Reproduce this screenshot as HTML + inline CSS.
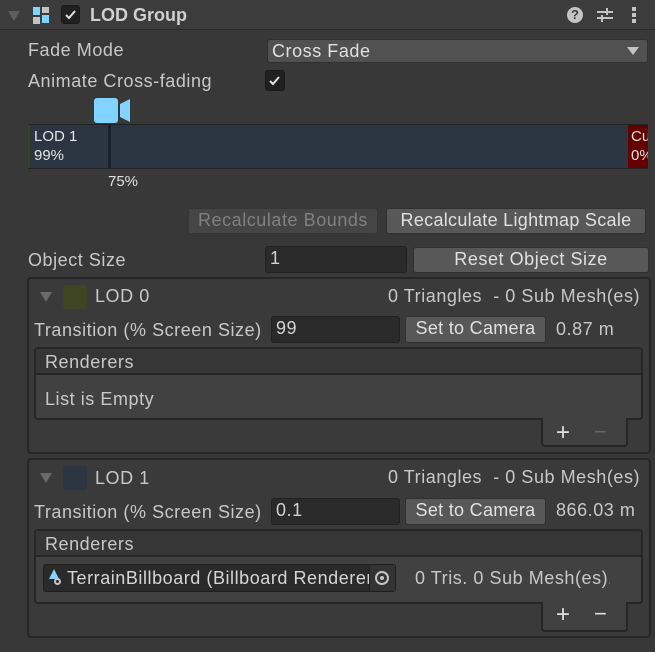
<!DOCTYPE html>
<html><head><style>
*{margin:0;padding:0;box-sizing:border-box}
body{width:655px;height:652px;background:#383838;font-family:"Liberation Sans",sans-serif;color:#c8c8c8;font-size:18px;letter-spacing:0.55px;position:relative;overflow:hidden}
.a{position:absolute;white-space:nowrap}
.t{line-height:20px}
.btn{position:absolute;background:#585858;border:1px solid #303030;border-radius:3px;color:#e0e0e0;text-align:center;line-height:23px}
.inp{position:absolute;background:#2a2a2a;border:1px solid #212121;border-radius:3px;color:#d2d2d2;padding-left:4px;line-height:23px}
.box{position:absolute;border:2px solid #262626;border-radius:4px;background:#3a3a3a}
.tri{position:absolute;width:0;height:0;border-left:6px solid transparent;border-right:6px solid transparent;border-top:10px solid #6a6a6a}
.cb{position:absolute;background:#202020;border:1px solid #1a1a1a;border-radius:3px}
</style></head><body>
<div class="a" style="left:0;top:0;width:655px;height:30px;background:#3c3c3c;border-bottom:1px solid #2a2a2a"></div>
<div class="tri" style="left:8px;top:11px;border-top-color:#5e5e5e"></div>
<div class="a" style="left:33px;top:7px;width:7px;height:8px;background:#80d4ff"></div>
<div class="a" style="left:42px;top:7px;width:7px;height:6px;background:#c4c4c4"></div>
<div class="a" style="left:33px;top:17px;width:7px;height:7px;background:#c4c4c4"></div>
<div class="a" style="left:42px;top:15px;width:7px;height:8px;background:#80d4ff"></div>
<div class="cb" style="left:61px;top:5px;width:19px;height:19px"></div>
<svg class="a" style="left:61px;top:5px" width="19" height="19"><path d="M5 10l3 3l6-7" stroke="#e0e0e0" stroke-width="2" fill="none"/></svg>
<div class="a t" style="left:90px;top:5px;font-weight:bold;font-size:18px;letter-spacing:0;color:#d0d0d0">LOD Group</div>
<div class="a" style="left:567px;top:7px;width:16px;height:16px;border-radius:50%;background:#c4c4c4;color:#3c3c3c;font-weight:bold;font-size:13px;letter-spacing:0;text-align:center;line-height:16px">?</div>
<svg class="a" style="left:596px;top:6px" width="18" height="18"><path d="M1 6h16M1 12h16M11 2v7M6 9v7" stroke="#c4c4c4" stroke-width="2"/></svg>
<div class="a" style="left:632px;top:7px;width:4px;height:4px;background:#c4c4c4;box-shadow:0 6px #c4c4c4,0 12px #c4c4c4"></div>

<div class="a t" style="left:28px;top:40px">Fade Mode</div>
<div class="a" style="left:267px;top:39px;width:381px;height:24px;background:#515151;border:1px solid #303030;border-radius:3px;color:#e0e0e0;padding-left:4px;line-height:22px">Cross Fade</div>
<div class="a" style="left:627px;top:47px;border-left:6px solid transparent;border-right:6px solid transparent;border-top:8px solid #c4c4c4"></div>
<div class="a t" style="left:28px;top:71px">Animate Cross-fading</div>
<div class="cb" style="left:265px;top:70px;width:20px;height:21px"></div>
<svg class="a" style="left:265px;top:71px" width="20" height="20"><path d="M5 10l3 3l6-7" stroke="#e0e0e0" stroke-width="2" fill="none"/></svg>

<div class="a" style="left:94px;top:98px;width:24px;height:25px;background:#80d4ff;border-radius:3px"></div>
<div class="a" style="left:120px;top:99px;width:0;height:23px;border-right:10px solid #80d4ff;border-top:5px solid transparent;border-bottom:5px solid transparent"></div>
<div class="a" style="left:28px;top:124px;width:620px;height:45px;background:#2c3542;border:1px solid #222"></div>
<div class="a" style="left:28px;top:125px;width:2px;height:43px;background:#3a4520"></div>
<div class="a" style="left:628px;top:125px;width:20px;height:43px;background:#640000;overflow:hidden;color:#e0e0e0;font-size:15px;letter-spacing:0;line-height:19px;padding:2px 0 0 3px">Cu<br>0%</div>
<div class="a" style="left:108px;top:125px;width:3px;height:43px;background:#1c2028"></div>
<div class="a" style="left:34px;top:127px;color:#e6e6e6;font-size:15px;letter-spacing:0;line-height:19px">LOD 1<br>99%</div>
<div class="a" style="left:108px;top:173px;color:#e0e0e0;font-size:15px;letter-spacing:0">75%</div>

<div class="btn" style="left:188px;top:208px;width:190px;height:26px;background:#454545;color:#808080;border-color:#353535">Recalculate Bounds</div>
<div class="btn" style="left:386px;top:208px;width:260px;height:26px;letter-spacing:0.3px">Recalculate Lightmap Scale</div>
<div class="a t" style="left:28px;top:250px">Object Size</div>
<div class="inp" style="left:265px;top:246px;width:142px;height:27px">1</div>
<div class="btn" style="left:413px;top:247px;width:236px;height:26px">Reset Object Size</div>

<!-- LOD0 -->
<div class="box" style="left:27px;top:277px;width:624px;height:177px"></div>
<div class="tri" style="left:40px;top:292px"></div>
<div class="a" style="left:63px;top:285px;width:24px;height:24px;background:#3f4521;border-radius:2px"></div>
<div class="a t" style="left:95px;top:286px">LOD 0</div>
<div class="a t" style="left:388px;top:286px">0 Triangles &nbsp;- 0 Sub Mesh(es)</div>
<div class="a t" style="left:34px;top:320px">Transition (% Screen Size)</div>
<div class="inp" style="left:271px;top:316px;width:129px;height:27px">99</div>
<div class="btn" style="left:405px;top:316px;width:141px;height:27px;letter-spacing:0.3px">Set to Camera</div>
<div class="a t" style="left:556px;top:319px">0.87 m</div>
<div class="a" style="left:34px;top:347px;width:609px;height:73px;background:#414141;border:2px solid #262626;border-radius:4px"></div>
<div class="a" style="left:36px;top:349px;width:605px;height:26px;background:#363636;border-bottom:2px solid #262626"></div>
<div class="a t" style="left:45px;top:352px">Renderers</div>
<div class="a t" style="left:45px;top:389px">List is Empty</div>
<div class="a" style="left:541px;top:418px;width:87px;height:29px;background:#414141;border:2px solid #262626;border-top:none;border-radius:0 0 4px 4px"></div>
<div class="a" style="left:556px;top:419px;font-size:24px;color:#e0e0e0">+</div>
<div class="a" style="left:594px;top:419px;font-size:22px;color:#666">−</div>

<!-- LOD1 -->
<div class="box" style="left:27px;top:458px;width:624px;height:180px"></div>
<div class="tri" style="left:40px;top:473px"></div>
<div class="a" style="left:63px;top:466px;width:24px;height:24px;background:#2c3542;border-radius:2px"></div>
<div class="a t" style="left:95px;top:468px">LOD 1</div>
<div class="a t" style="left:388px;top:467px">0 Triangles &nbsp;- 0 Sub Mesh(es)</div>
<div class="a t" style="left:34px;top:502px">Transition (% Screen Size)</div>
<div class="inp" style="left:271px;top:498px;width:129px;height:27px">0.1</div>
<div class="btn" style="left:405px;top:498px;width:141px;height:27px;letter-spacing:0.3px">Set to Camera</div>
<div class="a t" style="left:556px;top:500px">866.03 m</div>
<div class="a" style="left:34px;top:529px;width:609px;height:75px;background:#414141;border:2px solid #262626;border-radius:4px"></div>
<div class="a" style="left:36px;top:531px;width:605px;height:26px;background:#363636;border-bottom:2px solid #262626"></div>
<div class="a t" style="left:45px;top:534px">Renderers</div>
<div class="a" style="left:43px;top:564px;width:353px;height:28px;background:#2a2a2a;border:1px solid #1e1e1e;border-radius:3px;overflow:hidden"></div>
<div class="a" style="left:49px;top:569px;width:0;height:0;border-left:5px solid transparent;border-right:5px solid transparent;border-bottom:10px solid #80d4ff"></div>
<div class="a" style="left:54px;top:578px;width:7px;height:7px;border:2px solid #c4c4c4;border-radius:50%"></div>
<div class="a t" style="left:67px;top:568px;width:302px;overflow:hidden;color:#d6d6d6">TerrainBillboard (Billboard Renderer)</div>
<div class="a" style="left:369px;top:565px;width:26px;height:26px;background:#333;border-left:1px solid #222"></div>
<div class="a" style="left:375px;top:571px;width:14px;height:14px;border:2px solid #c4c4c4;border-radius:50%"></div>
<div class="a" style="left:380px;top:576px;width:4px;height:4px;background:#c4c4c4;border-radius:50%"></div>
<div class="a t" style="left:415px;top:568px;width:195px;overflow:hidden">0 Tris. 0 Sub Mesh(es).</div>
<div class="a" style="left:541px;top:602px;width:87px;height:30px;background:#414141;border:2px solid #262626;border-top:none;border-radius:0 0 4px 4px"></div>
<div class="a" style="left:556px;top:601px;font-size:24px;color:#e0e0e0">+</div>
<div class="a" style="left:594px;top:601px;font-size:22px;color:#e0e0e0">−</div>
</body></html>
